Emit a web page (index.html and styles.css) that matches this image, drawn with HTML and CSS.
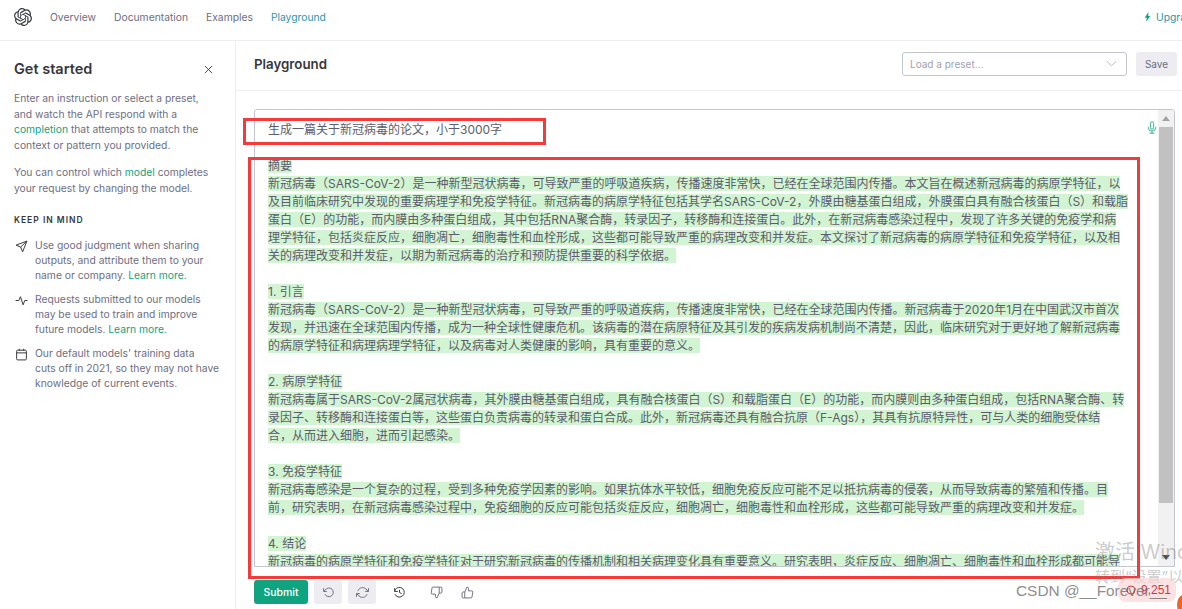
FILE: index.html
```html
<!DOCTYPE html>
<html lang="zh">
<head>
    <meta charset="UTF-8">
    <title>Playground - OpenAI API</title>
    <link rel="stylesheet" href="styles.css">
</head>
<body>
    <div class="topbar">
        <svg class="logo" viewBox="0 0 24 24"><path d="M22.2819 9.8211a5.9847 5.9847 0 0 0-.5157-4.9108 6.0462 6.0462 0 0 0-6.5098-2.9A6.0651 6.0651 0 0 0 4.9807 4.1818a5.9847 5.9847 0 0 0-3.9977 2.9 6.0462 6.0462 0 0 0 .7427 7.0966 5.98 5.98 0 0 0 .511 4.9107 6.051 6.051 0 0 0 6.5146 2.9001A5.9847 5.9847 0 0 0 13.2599 24a6.0557 6.0557 0 0 0 5.7718-4.2058 5.9894 5.9894 0 0 0 3.9977-2.9001 6.0557 6.0557 0 0 0-.7475-7.0729zm-9.022 12.6081a4.4755 4.4755 0 0 1-2.8764-1.0408l.1419-.0804 4.7783-2.7582a.7948.7948 0 0 0 .3927-.6813v-6.7369l2.02 1.1686a.071.071 0 0 1 .038.052v5.5826a4.504 4.504 0 0 1-4.4945 4.4944zm-9.6607-4.1254a4.4708 4.4708 0 0 1-.5346-3.0137l.142.0852 4.783 2.7582a.7712.7712 0 0 0 .7806 0l5.8428-3.3685v2.3324a.0804.0804 0 0 1-.0332.0615L9.74 19.9502a4.4992 4.4992 0 0 1-6.1408-1.6464zM2.3408 7.8956a4.485 4.485 0 0 1 2.3655-1.9728V11.6a.7664.7664 0 0 0 .3879.6765l5.8144 3.3543-2.0201 1.1685a.0757.0757 0 0 1-.071 0l-4.8303-2.7865A4.504 4.504 0 0 1 2.3408 7.872zm16.5963 3.8558L13.1038 8.364 15.1192 7.2a.0757.0757 0 0 1 .071 0l4.8303 2.7913a4.4944 4.4944 0 0 1-.6765 8.1042v-5.6772a.79.79 0 0 0-.407-.667zm2.0107-3.0231l-.142-.0852-4.7735-2.7818a.7759.7759 0 0 0-.7854 0L9.409 9.2297V6.8974a.0662.0662 0 0 1 .0284-.0615l4.8303-2.7866a4.4992 4.4992 0 0 1 6.6802 4.66zM8.3065 12.863l-2.02-1.1638a.0804.0804 0 0 1-.038-.0567V6.0742a4.4992 4.4992 0 0 1 7.3757-3.4537l-.142.0805L8.704 5.459a.7948.7948 0 0 0-.3927.6813zm1.0976-2.3654l2.602-1.4998 2.6069 1.4998v2.9994l-2.5974 1.4997-2.6067-1.4997Z"/></svg>
        <a class="nav-link">Overview</a>
        <a class="nav-link">Documentation</a>
        <a class="nav-link">Examples</a>
        <a class="nav-link active">Playground</a>
        <div class="upgrade">
            <svg class="bolt" viewBox="0 0 10 14"><path d="M6.5 0 1 8h3L3 14l6-8.500H6z"/></svg>
            <span>Upgrade</span>
        </div>
    </div>

    <div class="layout">
        <aside class="sidebar">
            <div class="side-title">
                <h2>Get started</h2>
                <svg class="ico-close" viewBox="0 0 10 10"><path d="M1 1l8 8M9 1l-8 8"/></svg>
            </div>
            <p class="side-text">Enter an instruction or select a preset, and watch the API respond with a <a>completion</a> that attempts to match the context or pattern you provided.</p>
            <p class="side-text">You can control which <a>model</a> completes your request by changing the model.</p>
            <h3>KEEP IN MIND</h3>
            <div class="tip">
                <svg class="ico" viewBox="0 0 24 24"><path d="M22 2 2 9.500l8.500 3.500 3.500 9zM22 2 10.500 13"/></svg>
                <p>Use good judgment when sharing outputs, and attribute them to your name or company. <a>Learn more</a>.</p>
            </div>
            <div class="tip">
                <svg class="ico" viewBox="0 0 24 24"><path d="M1 12h6l3-7 5 15 3-8h5"/></svg>
                <p>Requests submitted to our models may be used to train and improve future models. <a>Learn more</a>.</p>
            </div>
            <div class="tip">
                <svg class="ico" viewBox="0 0 24 24"><rect x="3" y="4" width="18" height="18" rx="2"/><path d="M3 9h18M8 1.500V5M16 1.500V5"/></svg>
                <p>Our default models' training data<br>cuts off in 2021, so they may not have knowledge of current events.</p>
            </div>
        </aside>

        <main class="main">
            <div class="main-head">
                <h1>Playground</h1>
                <div class="preset">
                    <span>Load a preset...</span>
                    <svg class="chevron" viewBox="0 0 12 7"><path d="M1 1l5 5 5-5"/></svg>
                </div>
                <button class="btn-save">Save</button>
            </div>

            <div class="editor">
                <div class="editor-text">
                    <p class="line">生成一篇关于新冠病毒的论文，小于3000字</p>
                    <p class="line"></p>
                    <p class="line"><span class="hl">摘要</span></p>
                    <p class="line"><span class="hl">新冠病毒（SARS-CoV-2）是一种新型冠状病毒，可导致严重的呼吸道疾病，传播速度非常快，已经在全球范围内传播。本文旨在概述新冠病毒的病原学特征，以</span></p>
                    <p class="line"><span class="hl">及目前临床研究中发现的重要病理学和免疫学特征。新冠病毒的病原学特征包括其学名SARS-CoV-2，外膜由糖基蛋白组成，外膜蛋白具有融合核蛋白（S）和载脂</span></p>
                    <p class="line"><span class="hl">蛋白（E）的功能，而内膜由多种蛋白组成，其中包括RNA聚合酶，转录因子，转移酶和连接蛋白。此外，在新冠病毒感染过程中，发现了许多关键的免疫学和病</span></p>
                    <p class="line"><span class="hl">理学特征，包括炎症反应，细胞凋亡，细胞毒性和血栓形成，这些都可能导致严重的病理改变和并发症。本文探讨了新冠病毒的病原学特征和免疫学特征，以及相</span></p>
                    <p class="line"><span class="hl">关的病理改变和并发症，以期为新冠病毒的治疗和预防提供重要的科学依据。</span></p>
                    <p class="line"></p>
                    <p class="line"><span class="hl">1. 引言</span></p>
                    <p class="line"><span class="hl">新冠病毒（SARS-CoV-2）是一种新型冠状病毒，可导致严重的呼吸道疾病，传播速度非常快，已经在全球范围内传播。新冠病毒于2020年1月在中国武汉市首次</span></p>
                    <p class="line"><span class="hl">发现，并迅速在全球范围内传播，成为一种全球性健康危机。该病毒的潜在病原特征及其引发的疾病发病机制尚不清楚，因此，临床研究对于更好地了解新冠病毒</span></p>
                    <p class="line"><span class="hl">的病原学特征和病理病理学特征，以及病毒对人类健康的影响，具有重要的意义。</span></p>
                    <p class="line"></p>
                    <p class="line"><span class="hl">2. 病原学特征</span></p>
                    <p class="line"><span class="hl">新冠病毒属于SARS-CoV-2属冠状病毒，其外膜由糖基蛋白组成，具有融合核蛋白（S）和载脂蛋白（E）的功能，而内膜则由多种蛋白组成，包括RNA聚合酶、转</span></p>
                    <p class="line"><span class="hl">录因子、转移酶和连接蛋白等，这些蛋白负责病毒的转录和蛋白合成。此外，新冠病毒还具有融合抗原（F-Ags），其具有抗原特异性，可与人类的细胞受体结</span></p>
                    <p class="line"><span class="hl">合，从而进入细胞，进而引起感染。</span></p>
                    <p class="line"></p>
                    <p class="line"><span class="hl">3. 免疫学特征</span></p>
                    <p class="line"><span class="hl">新冠病毒感染是一个复杂的过程，受到多种免疫学因素的影响。如果抗体水平较低，细胞免疫反应可能不足以抵抗病毒的侵袭，从而导致病毒的繁殖和传播。目</span></p>
                    <p class="line"><span class="hl">前，研究表明，在新冠病毒感染过程中，免疫细胞的反应可能包括炎症反应，细胞凋亡，细胞毒性和血栓形成，这些都可能导致严重的病理改变和并发症。</span></p>
                    <p class="line"></p>
                    <p class="line"><span class="hl">4. 结论</span></p>
                    <p class="line"><span class="hl">新冠病毒的病原学特征和免疫学特征对于研究新冠病毒的传播机制和相关病理变化具有重要意义。研究表明，炎症反应、细胞凋亡、细胞毒性和血栓形成都可能导</span></p>
                </div>
                <svg class="mic" viewBox="0 0 12 16"><rect x="4" y="1" width="4" height="9" rx="2"/><path d="M1.500 7v1a4.500 4.500 0 0 0 9 0V7M6 12.500V15M3 15h6"/></svg>
                <div class="scrollbar">
                    <div class="arrow up"></div>
                    <div class="thumb"></div>
                    <div class="arrow down"></div>
                </div>
            </div>

            <div class="actions">
                <button class="btn-submit">Submit</button>
                <button class="btn-icon">
                    <svg viewBox="0 0 24 24"><path d="M3 4v6h6"/><path d="M5.500 15a8 8 0 1 0 .5-7.500L3 10"/></svg>
                </button>
                <button class="btn-icon">
                    <svg viewBox="0 0 24 24"><path d="M23 4v6h-6M1 20v-6h6"/><path d="M3.500 9A9 9 0 0 1 18.400 5.600L23 10M1 14l4.600 4.400A9 9 0 0 0 20.500 15"/></svg>
                </button>
                <span class="plain dark history">
                    <svg viewBox="0 0 24 24"><path d="M3 4v6h6"/><path d="M3.500 15a9 9 0 1 0 .5-8L3 10"/><path d="M12 7v5l4 2"/></svg>
                </span>
                <span class="plain down-thumb">
                    <svg viewBox="0 0 24 24"><path d="M10 15v4a3 3 0 0 0 3 3l4-9V2H5.700a2 2 0 0 0-2 1.700l-1.400 9a2 2 0 0 0 2 2.300zM17 2h3a2 2 0 0 1 2 2v7a2 2 0 0 1-2 2h-3"/></svg>
                </span>
                <span class="plain up-thumb">
                    <svg viewBox="0 0 24 24"><path d="M14 9V5a3 3 0 0 0-3-3l-4 9v11h11.300a2 2 0 0 0 2-1.700l1.400-9a2 2 0 0 0-2-2.300zM7 22H4a2 2 0 0 1-2-2v-7a2 2 0 0 1 2-2h3"/></svg>
                </span>
            </div>
        </main>
    </div>

    <!-- annotations and overlays from the screenshot -->
    <div class="mark mark-prompt"></div>
    <div class="mark mark-answer"></div>
    <div class="wm wm-activate">激活 Windows</div>
    <div class="wm wm-settings">转到“设置”以激活</div>
    <div class="count-pill">
        <svg viewBox="0 0 10 10"><circle cx="5" cy="5" r="4"/></svg>
        <span>9,251</span>
    </div>
    <div class="csdn">CSDN @__Forever__</div>
    <div class="corner"></div>
</body>
</html>
```

FILE: styles.css
```css
* {
    box-sizing: border-box;
}
html, body {
    height: 100%;
}
body {
    font-family: Inter, "Noto Sans CJK SC", sans-serif;
    font-size: 10.3px;
    color: #6e6e80;
    background: #fff;
    margin: 0;
    overflow: hidden;
    display: flex;
    flex-direction: column;
}
a {
    color: #10a37f;
}
svg {
    display: block;
    fill: none;
    stroke: currentColor;
}

/* top nav */
.topbar {
    height: 41px;
    flex: none;
    display: flex;
    align-items: center;
    padding: 0 0 6px 14px;
    border-bottom: 1px solid #ececf1;
}
.logo {
    width: 18px;
    height: 18px;
    margin-right: 18px;
    fill: #353740;
    stroke: none;
}
.nav-link {
    color: #6e6e80;
    margin-right: 18px;
}
.nav-link.active {
    color: #2e95a8;
}
.upgrade {
    margin-left: auto;
    width: 38px;
    overflow: hidden;
    display: flex;
    align-items: center;
    gap: 5px;
    color: #2e95a8;
    white-space: nowrap;
}
.bolt {
    width: 7px;
    height: 10px;
    flex: none;
    fill: #10a37f;
    stroke: none;
}

.layout {
    flex: 1;
    display: flex;
    min-height: 0;
}

/* left panel */
.sidebar {
    width: 236px;
    flex: none;
    padding: 18px 18px 0 14px;
    border-right: 1px solid #ececf1;
}
.side-title {
    display: flex;
    align-items: center;
    justify-content: space-between;
    margin-bottom: 12px;
    padding-right: 4px;
}
.side-title h2 {
    margin: 0;
    font-size: 14.5px;
    line-height: 20px;
    font-weight: 600;
    color: #353740;
}
.ico-close {
    width: 9px;
    height: 9px;
    stroke: #353740;
}
.side-text {
    margin: 0 0 11px;
    line-height: 15.7px;
}
.sidebar h3 {
    margin: 18px 0 12px;
    font-size: 8.5px;
    line-height: 12px;
    font-weight: 600;
    letter-spacing: 1px;
    color: #353740;
}
.tip {
    display: flex;
    gap: 7px;
    margin: 0 -4px 9px 0;
}
.tip p {
    margin: 0;
    line-height: 15px;
}
.ico {
    width: 13px;
    height: 13px;
    flex: none;
    margin: 2px 0 0 1px;
    stroke: #353740;
    stroke-width: 1.8;
}

/* playground */
.main {
    flex: 1;
    min-width: 0;
    display: flex;
    flex-direction: column;
}
.main-head {
    height: 50px;
    flex: none;
    display: flex;
    align-items: center;
    padding: 0 5px 4px 18px;
    border-bottom: 1px solid #ececf1;
}
.main-head h1 {
    margin: 0 auto 0 0;
    font-size: 13.3px;
    font-weight: 600;
    color: #353740;
}
.preset {
    width: 225px;
    height: 24px;
    display: flex;
    align-items: center;
    justify-content: space-between;
    padding: 0 9px 0 7px;
    border: 1px solid #c5c5d2;
    border-radius: 3px;
    font-size: 10px;
    color: #a0a0b0;
}
.chevron {
    width: 11px;
    height: 7px;
    stroke: #b5b5c2;
}
.btn-save {
    width: 41px;
    height: 24px;
    margin-left: 9px;
    border: 0;
    border-radius: 3px;
    background: #ececf1;
    color: #6e6e80;
    font: 10px Inter, sans-serif;
}

.editor {
    height: 458px;
    flex: none;
    margin: 18px 7px 0 18px;
    display: flex;
    position: relative;
    border: 1px solid #c5c5d2;
    border-radius: 3px 3px 0 0;
    overflow: hidden;
}
.editor-text {
    flex: 1;
    min-width: 0;
    padding: 11px 0 0 13px;
    font-size: 12px;
    color: #5c5c6c;
}
.line {
    margin: 0;
    height: 18px;
    line-height: 18px;
    white-space: nowrap;
}
.hl {
    background: #d2f4d3;
}
.mic {
    position: absolute;
    right: 17px;
    top: 11px;
    width: 10px;
    height: 13px;
    stroke: #10a37f;
}
.scrollbar {
    width: 16px;
    flex: none;
    display: flex;
    flex-direction: column;
    background: #f1f1f1;
}
.arrow {
    height: 17px;
    flex: none;
    position: relative;
}
.arrow::after {
    content: "";
    position: absolute;
    left: 4px;
    top: 6px;
    border-left: 4px solid transparent;
    border-right: 4px solid transparent;
}
.arrow.up::after {
    border-bottom: 5px solid #a3a3a3;
}
.arrow.down {
    margin-top: auto;
}
.arrow.down::after {
    border-top: 5px solid #505050;
}
.thumb {
    height: 376px;
    margin: 0 1px;
    background: #c1c1c1;
}

/* bottom buttons */
.actions {
    margin: 13px 0 0 18px;
    display: flex;
    align-items: center;
    gap: 6px;
}
.btn-submit {
    width: 54px;
    height: 24px;
    border: 0;
    border-radius: 3px;
    background: #10a37f;
    color: #fff;
    font: 500 10.5px Inter, sans-serif;
}
.btn-icon {
    width: 28px;
    height: 24px;
    padding: 0;
    border: 0;
    border-radius: 3px;
    background: #ececf1;
    display: flex;
    align-items: center;
    justify-content: center;
    color: #6e6e80;
}
.btn-icon svg, .plain svg {
    width: 13px;
    height: 13px;
    stroke-width: 1.8;
}
.plain {
    color: #6e6e80;
}
.plain.dark {
    color: #353740;
}
.history {
    margin-left: 11px;
}
.down-thumb {
    margin-left: 18px;
}
.up-thumb {
    margin-left: 12px;
}

/* red boxes drawn on top of the screenshot */
.mark {
    position: absolute;
    border: 3px solid #f53a3a;
}
.mark-prompt {
    left: 243px;
    top: 118px;
    width: 303px;
    height: 27px;
}
.mark-answer {
    left: 248px;
    top: 157px;
    width: 892px;
    height: 422px;
}
.wm {
    position: absolute;
    white-space: nowrap;
    color: rgba(120, 120, 120, 0.4);
}
.wm-activate {
    left: 1095px;
    top: 540px;
    font-size: 20px;
    line-height: 24px;
}
.wm-settings {
    left: 1095px;
    top: 569px;
    font-size: 15px;
    line-height: 16px;
}
.count-pill {
    position: absolute;
    left: 1118px;
    top: 578px;
    width: 58px;
    height: 24px;
    padding: 0 5px 0 8px;
    display: flex;
    align-items: center;
    justify-content: space-between;
    border-radius: 8px;
    background: rgba(250, 215, 215, 0.7);
    color: #d9343a;
    font: 12px "Liberation Sans", sans-serif;
}
.count-pill svg {
    width: 10px;
    height: 10px;
}
.csdn {
    position: absolute;
    left: 1016px;
    top: 582px;
    font: 15.4px/18px "Liberation Sans", sans-serif;
    white-space: nowrap;
    color: rgba(110, 110, 110, 0.8);
}
.corner {
    position: absolute;
    left: 1177px;
    top: 595px;
    width: 12px;
    height: 20px;
    border-radius: 50%;
    background: #f0661e;
}
```
